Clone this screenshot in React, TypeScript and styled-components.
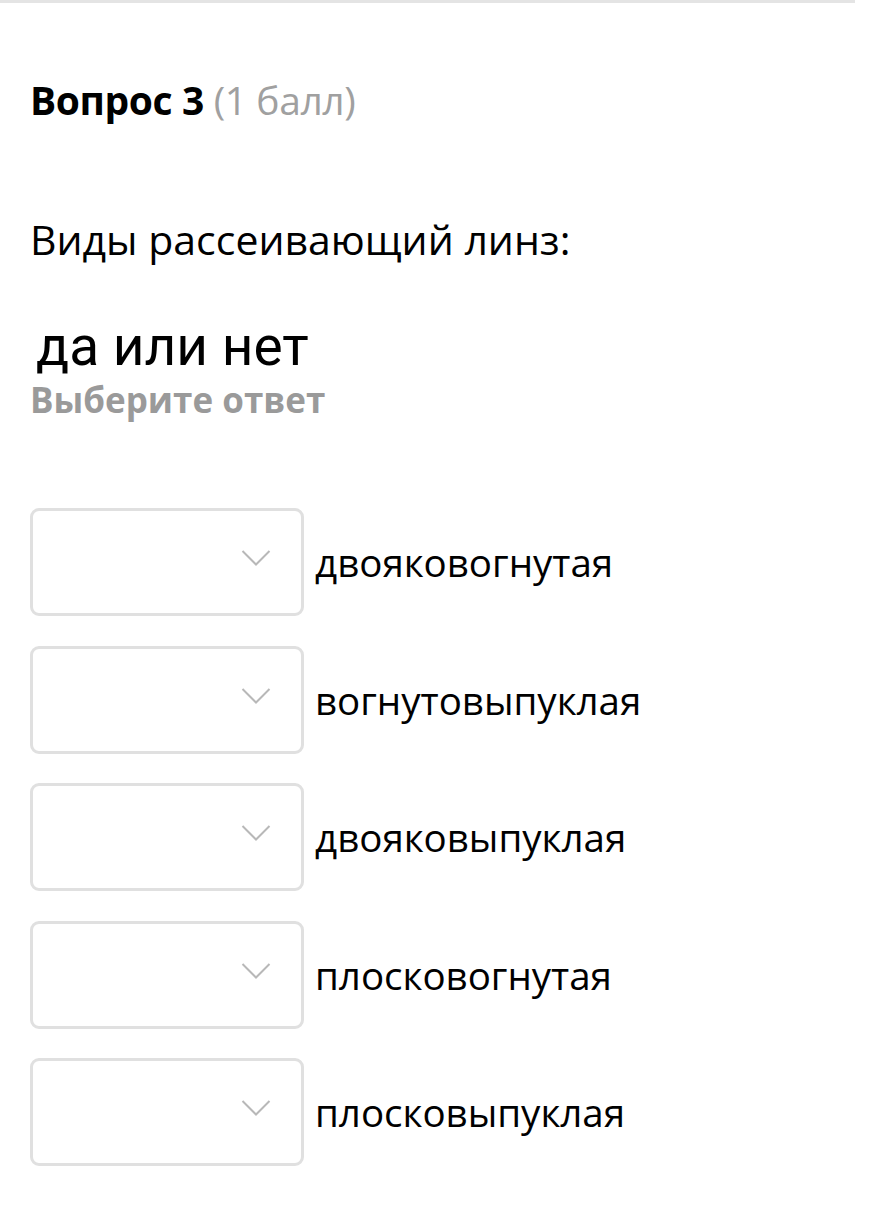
import React from "react";
import styled, { createGlobalStyle } from "styled-components";

const Global = createGlobalStyle`
  html, body { margin: 0; padding: 0; background: #fff; }
  body { font-family: "Open Sans", "Noto Sans", sans-serif; color: #000; }
`;

const Page = styled.div`
  width: 885px;
  min-height: 1228px;
  box-sizing: border-box;
`;

const TopRule = styled.div`
  width: 855px;
  height: 3px;
  background: #e4e4e4;
`;

const Content = styled.div`
  padding: 72px 0 0 30px;
`;

const Header = styled.h2`
  margin: 0;
  font-size: 39px;
  line-height: 50px;
  font-weight: 700;
  letter-spacing: -0.4px;
`;

const Points = styled.span`
  font-weight: 400;
  color: #a0a0a0;
`;

const Question = styled.p`
  margin: 88px 0 0;
  font-size: 41px;
  line-height: 52px;
  font-weight: 400;
`;

const Hint = styled.div`
  margin-top: 53px;
  margin-left: 6px;
  font-family: "Roboto", sans-serif;
  font-size: 55px;
  line-height: 56px;
`;

const Prompt = styled.div`
  margin-top: 5px;
  font-size: 35px;
  line-height: 42px;
  font-weight: 700;
  color: #9a9a9a;
`;

const List = styled.div`
  margin-top: 87px;
  display: flex;
  flex-direction: column;
  gap: 29.5px;
`;

const Row = styled.div`
  display: flex;
  align-items: center;
  gap: 11px;
`;

const SelectBox = styled.div`
  width: 274px;
  height: 108px;
  box-sizing: border-box;
  border: 3px solid #e0e0e0;
  border-radius: 9px;
  display: flex;
  align-items: flex-start;
  justify-content: flex-end;
  padding: 38px 30px 0 0;
`;

const Label = styled.span`
  font-size: 38.5px;
  line-height: 50px;
`;

const Chevron = () => (
  <svg width="30" height="18" viewBox="0 0 30 18">
    <polyline points="1.5,2 15,15.5 28.5,2" fill="none" stroke="#b8b8b8" strokeWidth="2" />
  </svg>
);

const options = [
  "двояковогнутая",
  "вогнутовыпуклая",
  "двояковыпуклая",
  "плосковогнутая",
  "плосковыпуклая",
];

export default function App() {
  return (
    <Page>
      <Global />
      <TopRule />
      <Content>
        <Header>
          Вопрос 3 <Points>(1 балл)</Points>
        </Header>
        <Question>Виды рассеивающий линз:</Question>
        <Hint>да или нет</Hint>
        <Prompt>Выберите ответ</Prompt>
        <List>
          {options.map((o) => (
            <Row key={o}>
              <SelectBox>
                <Chevron />
              </SelectBox>
              <Label>{o}</Label>
            </Row>
          ))}
        </List>
      </Content>
    </Page>
  );
}
